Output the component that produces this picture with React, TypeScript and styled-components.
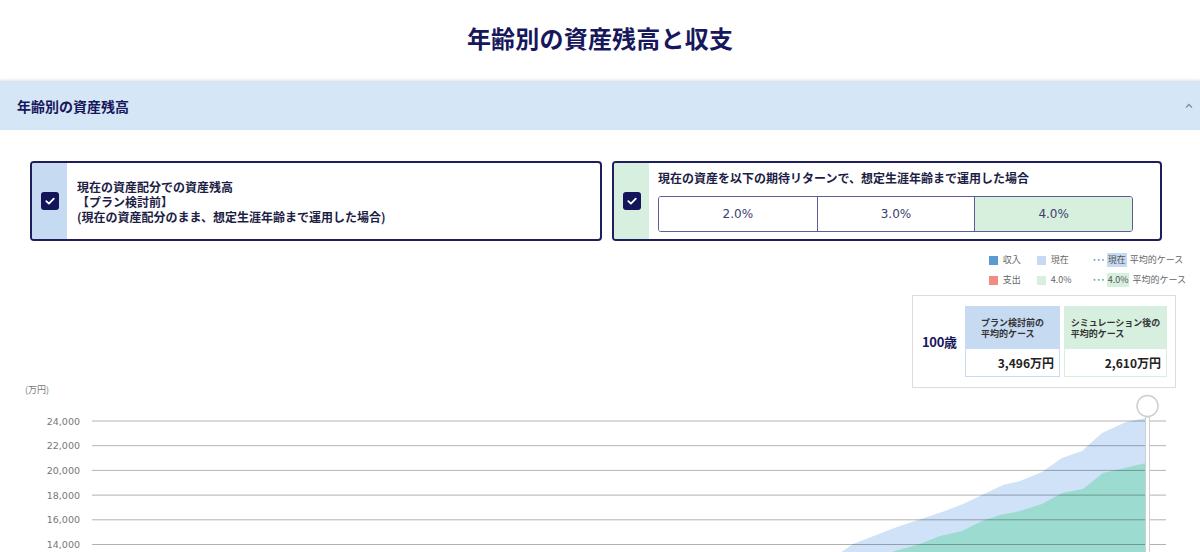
import React, { useState } from "react";
import styled, { createGlobalStyle } from "styled-components";

const GlobalStyle = createGlobalStyle`
  html, body { margin: 0; padding: 0; background: #fff; overflow: hidden; }
  body {
    font-family: "Noto Sans CJK JP", "Noto Sans", sans-serif;
    color: #1b1b4d;
  }
  * { box-sizing: border-box; }
`;

const Page = styled.div`
  width: 1200px;
`;

const Title = styled.h1`
  margin: 0;
  height: 81px;
  display: flex;
  align-items: center;
  justify-content: center;
  padding-bottom: 7px;
  font-size: 24px;
  font-weight: 700;
  color: #17175c;
  letter-spacing: 0.2px;
`;

const AccordionHeader = styled.div`
  height: 49px;
  background: #d5e6f6;
  box-shadow: 0 -1px 3px rgba(0, 0, 0, 0.12);
  display: flex;
  align-items: center;
  justify-content: space-between;
  padding: 0 6px 0 17px;
`;

const AccordionTitle = styled.h2`
  margin: 0;
  font-size: 14px;
  font-weight: 700;
  color: #17175c;
`;

const CardRow = styled.div`
  display: grid;
  grid-template-columns: 572fr 550fr;
  gap: 10px;
  padding: 31px 38px 0 30px;
`;

const Card = styled.div`
  height: 80px;
  border: 2px solid #1e1e5e;
  border-radius: 4px;
  display: flex;
  overflow: hidden;
`;

const CardStrip = styled.div<{ $tone: "blue" | "green" }>`
  width: 35px;
  flex: none;
  background: ${(p) => (p.$tone === "blue" ? "#c6daf1" : "#d7efdf")};
  display: flex;
  align-items: center;
  justify-content: center;
`;

const CheckBox = styled.span`
  width: 18px;
  height: 18px;
  border-radius: 3px;
  background: #14145a;
  display: flex;
  align-items: center;
  justify-content: center;
`;

const CardText = styled.div`
  padding-left: 10px;
  display: flex;
  flex-direction: column;
  justify-content: center;
  font-size: 12px;
  line-height: 15px;
  font-weight: 700;
  color: #1d1d45;
`;

const CardBody = styled.div`
  flex: 1;
  padding: 6px 27px 0 9px;
`;

const CardHeading = styled.div`
  font-size: 12px;
  font-weight: 700;
  line-height: 18px;
  color: #1d1d45;
  margin-bottom: 9px;
`;

const Segments = styled.div`
  display: grid;
  grid-template-columns: repeat(3, 1fr);
  height: 36px;
  border: 1px solid #5c5c98;
  border-radius: 3px;
  overflow: hidden;
`;

const Segment = styled.button<{ $active: boolean }>`
  border: none;
  border-left: 1px solid #5c5c98;
  &:first-child { border-left: none; }
  background: ${(p) => (p.$active ? "#d7efdd" : "#fff")};
  font-family: "DejaVu Sans", "Noto Sans CJK JP", sans-serif;
  font-size: 12px;
  color: #3d3d70;
  cursor: pointer;
  padding: 0;
`;

const LegendWrap = styled.div`
  display: flex;
  justify-content: flex-end;
  padding: 12px 14px 0 0;
`;

const LegendGrid = styled.div`
  display: grid;
  grid-template-columns: 48px 55px auto;
  row-gap: 6px;
  font-size: 9px;
  line-height: 12px;
  color: #666;
`;

const LegendItem = styled.div`
  display: flex;
  align-items: center;
  gap: 5px;
  white-space: nowrap;
`;

const Swatch = styled.span<{ $color: string }>`
  width: 9px;
  height: 9px;
  background: ${(p) => p.$color};
  flex: none;
`;

const Dots = styled.span<{ $color: string }>`
  color: ${(p) => p.$color};
  letter-spacing: -1px;
  margin-right: 2px;
  font-weight: 700;
`;

const Tag = styled.span<{ $color: string }>`
  background: ${(p) => p.$color};
  color: #555;
  padding: 1px 1px;
  margin-right: 3px;
`;

const SummaryWrap = styled.div`
  display: flex;
  justify-content: flex-end;
  padding: 8px 24px 0 0;
`;

const SummaryBox = styled.div`
  width: 264px;
  height: 93px;
  border: 1px solid #dcdcdc;
  display: flex;
  align-items: center;
  padding: 0 8px 0 9px;
  gap: 6px;
`;

const AgeLabel = styled.div`
  flex: 1;
  white-space: nowrap;
  font-size: 13px;
  font-weight: 700;
  color: #17175c;
  letter-spacing: -0.3px;
`;

const Cells = styled.div`
  display: flex;
  gap: 4px;
`;

const Cell = styled.div<{ $tone: "blue" | "green"; $w: number }>`
  width: ${(p) => p.$w}px;
  border: 1px solid ${(p) => (p.$tone === "blue" ? "#c6daf1" : "#d7efdf")};
  display: flex;
  flex-direction: column;
`;

const CellHead = styled.div<{ $tone: "blue" | "green" }>`
  height: 42px;
  background: ${(p) => (p.$tone === "blue" ? "#c6daf1" : "#d7efdf")};
  display: flex;
  align-items: center;
  justify-content: center;
  font-size: 9px;
  line-height: 11px;
  font-weight: 700;
  color: #333;
`;

const CellValue = styled.div`
  height: 27px;
  display: flex;
  align-items: center;
  justify-content: flex-end;
  padding-right: 5px;
  font-size: 12px;
  font-weight: 700;
  color: #222;
`;

const ChartWrap = styled.div`
  margin-top: -7px;
`;

const ChartSvg = styled.svg`
  display: block;
`;

const gridValues = [24000, 22000, 20000, 18000, 16000, 14000];

const bluePts: [number, number][] = [
  [760, 240], [840, 172], [853, 163], [897, 146], [945, 130], [963, 123], [1003, 104],
  [1020, 100], [1042, 91], [1062, 77], [1082, 70], [1102, 52], [1126, 41], [1146, 37],
];
const greenPts: [number, number][] = [
  [800, 240], [888, 172], [920, 163], [940, 155], [962, 150], [982, 140], [1000, 134],
  [1020, 130], [1042, 123], [1062, 112], [1083, 108], [1103, 92], [1125, 87], [1146, 82],
];

const areaPath = (pts: [number, number][]) =>
  `M ${pts[0][0]} 300 ` + pts.map(([x, y]) => `L ${x} ${y}`).join(" ") + ` L ${pts[pts.length - 1][0]} 300 Z`;

function Check() {
  return (
    <svg width="12" height="12" viewBox="0 0 12 12">
      <path d="M2.3 6.2 L4.9 8.6 L9.8 3.6" fill="none" stroke="#fff" strokeWidth="1.8" strokeLinecap="round" strokeLinejoin="round" />
    </svg>
  );
}

function ChevronUp() {
  return (
    <svg width="10" height="8" viewBox="0 0 10 8">
      <path d="M2 5.5 L5 2.5 L8 5.5" fill="none" stroke="#8a8a9a" strokeWidth="1.3" />
    </svg>
  );
}

export default function App() {
  const [rate, setRate] = useState("4.0%");
  const rates = ["2.0%", "3.0%", "4.0%"];
  return (
    <Page>
      <GlobalStyle />
      <Title>年齢別の資産残高と収支</Title>
      <AccordionHeader>
        <AccordionTitle>年齢別の資産残高</AccordionTitle>
        <ChevronUp />
      </AccordionHeader>

      <CardRow>
        <Card>
          <CardStrip $tone="blue">
            <CheckBox>
              <Check />
            </CheckBox>
          </CardStrip>
          <CardText>
            <span>現在の資産配分での資産残高</span>
            <span>【プラン検討前】</span>
            <span>(現在の資産配分のまま、想定生涯年齢まで運用した場合)</span>
          </CardText>
        </Card>
        <Card>
          <CardStrip $tone="green">
            <CheckBox>
              <Check />
            </CheckBox>
          </CardStrip>
          <CardBody>
            <CardHeading>現在の資産を以下の期待リターンで、想定生涯年齢まで運用した場合</CardHeading>
            <Segments>
              {rates.map((r) => (
                <Segment key={r} $active={r === rate} onClick={() => setRate(r)}>
                  {r}
                </Segment>
              ))}
            </Segments>
          </CardBody>
        </Card>
      </CardRow>

      <LegendWrap>
        <LegendGrid>
          <LegendItem>
            <Swatch $color="#5b9bd0" />
            収入
          </LegendItem>
          <LegendItem>
            <Swatch $color="#c6daf1" />
            現在
          </LegendItem>
          <LegendItem style={{ gap: 0 }}>
            <Dots $color="#6d8fc4">···</Dots>
            <Tag $color="#c6daf1">現在</Tag>
            平均的ケース
          </LegendItem>
          <LegendItem>
            <Swatch $color="#f28b82" />
            支出
          </LegendItem>
          <LegendItem>
            <Swatch $color="#d7efdf" />
            4.0%
          </LegendItem>
          <LegendItem style={{ gap: 0 }}>
            <Dots $color="#5aa88a">···</Dots>
            <Tag $color="#d7efdf">4.0%</Tag>
            平均的ケース
          </LegendItem>
        </LegendGrid>
      </LegendWrap>

      <SummaryWrap>
        <SummaryBox>
          <AgeLabel>100歳</AgeLabel>
          <Cells>
            <Cell $tone="blue" $w={95}>
              <CellHead $tone="blue">
                <div>
                  プラン検討前の
                  <br />
                  平均的ケース
                </div>
              </CellHead>
              <CellValue>3,496万円</CellValue>
            </Cell>
            <Cell $tone="green" $w={103}>
              <CellHead $tone="green">
                <div>
                  シミュレーション後の
                  <br />
                  平均的ケース
                </div>
              </CellHead>
              <CellValue>2,610万円</CellValue>
            </Cell>
          </Cells>
        </SummaryBox>
      </SummaryWrap>

      <ChartWrap>
        <ChartSvg width="1200" height="300" viewBox="0 0 1200 300">
          <text x="25" y="12" fontSize="9" fill="#777" fontFamily="Noto Sans CJK JP, sans-serif">
            (万円)
          </text>
          <path d={areaPath(bluePts)} fill="#cfe2f8" />
          <path d={areaPath(greenPts)} fill="#9cdbd0" />
          {gridValues.map((v, i) => {
            const y = 40 + i * 24.7;
            return (
              <g key={v}>
                <line x1="92" x2="1166" y1={y} y2={y} stroke="rgba(0,0,0,0.3)" strokeWidth="1" />
                <text x="80" y={y + 3.5} textAnchor="end" fontSize="9.5" fill="#777" fontFamily="DejaVu Sans, sans-serif">
                  {v.toLocaleString("en-US")}
                </text>
              </g>
            );
          })}
          <line x1="92" x2="1166" y1={40 + 6 * 24.7} y2={40 + 6 * 24.7} stroke="rgba(0,0,0,0.3)" strokeWidth="1" />
          <rect x="1145.5" y="36" width="4" height="270" fill="#fff" stroke="#cfcfcf" strokeWidth="1" />
          <circle cx="1147.5" cy="25" r="10.5" fill="#fff" stroke="#cfcfcf" strokeWidth="1.5" />
        </ChartSvg>
      </ChartWrap>
    </Page>
  );
}
